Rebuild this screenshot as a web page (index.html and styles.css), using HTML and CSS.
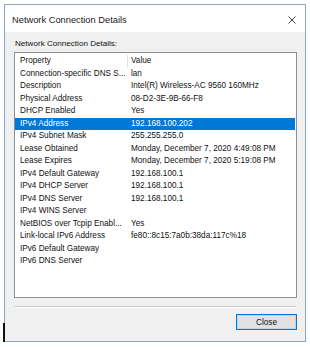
FILE: index.html
```html
<!DOCTYPE html>
<html lang="en">
<head>
    <meta charset="UTF-8">
    <title>Network Connection Details</title>
    <link rel="stylesheet" href="styles.css">
</head>
<body>
    <div class="window">
        <div class="titlebar">
            <span class="title">Network Connection Details</span>
            <svg class="close-x" width="8" height="8" viewBox="0 0 8 8">
                <path d="M0.5 0.5 L7.5 7.5 M7.5 0.5 L0.5 7.5" stroke="#2b2b2b" stroke-width="0.9" fill="none"/>
            </svg>
        </div>
        <div class="client">
            <div class="caption">Network Connection Details:</div>
            <div class="list">
                <div class="row head"><span class="prop">Property</span><span class="val">Value</span></div>
                <div class="row"><span class="prop">Connection-specific DNS S...</span><span class="val">lan</span></div>
                <div class="row"><span class="prop">Description</span><span class="val">Intel(R) Wireless-AC 9560 160MHz</span></div>
                <div class="row"><span class="prop">Physical Address</span><span class="val">08-D2-3E-9B-66-F8</span></div>
                <div class="row"><span class="prop">DHCP Enabled</span><span class="val">Yes</span></div>
                <div class="row selected"><span class="prop">IPv4 Address</span><span class="val">192.168.100.202</span></div>
                <div class="row"><span class="prop">IPv4 Subnet Mask</span><span class="val">255.255.255.0</span></div>
                <div class="row"><span class="prop">Lease Obtained</span><span class="val">Monday, December 7, 2020 4:49:08 PM</span></div>
                <div class="row"><span class="prop">Lease Expires</span><span class="val">Monday, December 7, 2020 5:19:08 PM</span></div>
                <div class="row"><span class="prop">IPv4 Default Gateway</span><span class="val">192.168.100.1</span></div>
                <div class="row"><span class="prop">IPv4 DHCP Server</span><span class="val">192.168.100.1</span></div>
                <div class="row"><span class="prop">IPv4 DNS Server</span><span class="val">192.168.100.1</span></div>
                <div class="row"><span class="prop">IPv4 WINS Server</span><span class="val"></span></div>
                <div class="row"><span class="prop">NetBIOS over Tcpip Enabl...</span><span class="val">Yes</span></div>
                <div class="row"><span class="prop">Link-local IPv6 Address</span><span class="val">fe80::8c15:7a0b:38da:117c%18</span></div>
                <div class="row"><span class="prop">IPv6 Default Gateway</span><span class="val"></span></div>
                <div class="row"><span class="prop">IPv6 DNS Server</span><span class="val"></span></div>
            </div>
            <div class="separator"></div>
            <div class="actions">
                <button class="btn">Close</button>
            </div>
        </div>
    </div>
</body>
</html>
```

FILE: styles.css
```css
body {
    margin: 0;
    background-color: #fff;
    font-family: "Liberation Sans", Arial, sans-serif;
    color: #111;
}
.window {
    position: relative;
    display: flex;
    flex-direction: column;
    box-sizing: border-box;
    width: 302px;
    height: 338px;
    margin: 4px 0 0 4px;
    border: 1px solid #8ea6c6;
}
.window::after {
    content: "";
    position: absolute;
    left: -2px;
    bottom: -1px;
    width: 2px;
    height: 19px;
    background-color: #111;
}
.titlebar {
    display: flex;
    align-items: center;
    justify-content: space-between;
    height: 27px;
    padding: 2px 9px 0 7px;
    box-sizing: border-box;
    background-color: #fff;
}
.title {
    font-size: 9.3px;
    color: #1a1a1a;
}
.client {
    flex: 1;
    padding: 7px 8px 0 9px;
    background-color: #f0f0f0;
}
.caption {
    height: 10px;
    line-height: 10px;
    margin-bottom: 3px;
    padding-left: 1px;
    font-size: 8.1px;
}
.list {
    box-sizing: border-box;
    width: 283px;
    height: 246px;
    padding-top: 2px;
    border: 1px solid #8c9096;
    background-color: #fff;
}
.row {
    display: flex;
    height: 12.5px;
    line-height: 12.5px;
    margin-right: 1px;
    font-size: 8.2px;
    white-space: nowrap;
}
.prop {
    width: 107px;
    padding-left: 5px;
    border-right: 1px solid transparent;
    overflow: hidden;
}
.val {
    padding-left: 3px;
}
.head .prop {
    border-right-color: #e3e3e3;
}
.selected {
    background-color: #0078d7;
    color: #fff;
}
.separator {
    width: 281px;
    margin: 8px 0 0 1px;
    border-top: 1px solid #c8c8c8;
    border-bottom: 1px solid #fff;
}
.actions {
    display: flex;
    justify-content: flex-end;
    width: 283px;
    margin-top: 6px;
}
.btn {
    width: 61px;
    height: 16px;
    padding: 0;
    border: 1px solid #0078d7;
    box-shadow: inset 0 0 0 1px #bcd6f0;
    background-color: #e1e1e1;
    font-family: "Liberation Sans", Arial, sans-serif;
    font-size: 8.2px;
    color: #111;
}
```
